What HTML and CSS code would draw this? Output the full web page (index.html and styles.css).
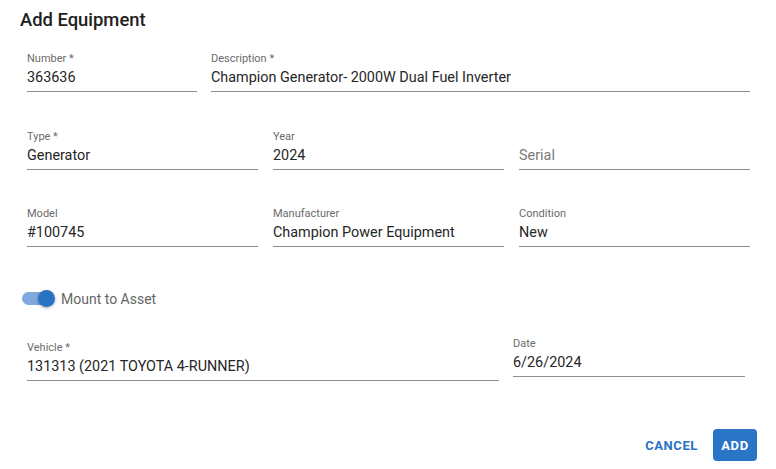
FILE: index.html
```html
<!DOCTYPE html>
<html>
<head>
<meta charset="utf-8">
<title>Add Equipment</title>
<link rel="stylesheet" href="styles.css">
</head>
<body>
<div class="dialog">
  <h2 class="title">Add Equipment</h2>
  <div class="content">
    <div class="row row-a">
      <div class="field"><div class="label">Number *</div><div class="value">363636</div></div>
      <div class="field"><div class="label">Description *</div><div class="value">Champion Generator- 2000W Dual Fuel Inverter</div></div>
    </div>
    <div class="row row-b">
      <div class="field"><div class="label">Type *</div><div class="value">Generator</div></div>
      <div class="field"><div class="label">Year</div><div class="value">2024</div></div>
      <div class="field"><div class="label"></div><div class="value placeholder">Serial</div></div>
    </div>
    <div class="row row-b">
      <div class="field"><div class="label">Model</div><div class="value">#100745</div></div>
      <div class="field"><div class="label">Manufacturer</div><div class="value">Champion Power Equipment</div></div>
      <div class="field"><div class="label">Condition</div><div class="value">New</div></div>
    </div>
    <div class="toggle-row">
      <span class="switch"><span class="track"></span><span class="thumb"></span></span>
      <span class="toggle-label">Mount to Asset</span>
    </div>
    <div class="row row-c">
      <div class="field"><div class="label">Vehicle *</div><div class="value">131313 (2021 TOYOTA 4-RUNNER)</div></div>
      <div class="field field-date"><div class="label">Date</div><div class="value">6/26/2024</div></div>
    </div>
  </div>
  <div class="actions">
    <button class="btn btn-text">CANCEL</button>
    <button class="btn btn-primary">ADD</button>
  </div>
</div>
</body>
</html>
```
FILE: styles.css
```css
* { box-sizing: border-box; }
html, body { margin: 0; padding: 0; background: #fff; }
body { font-family: Roboto, "Noto Sans", "Liberation Sans", sans-serif; color: #212121; }
.dialog { width: 776px; height: 469px; display: flex; flex-direction: column; }
.title { margin: 8px 0 0 20px; font-size: 18.4px; font-weight: 500; line-height: 24px; color: #212121; }
.content { padding: 0 26px 0 27px; margin-top: 20px; }
.row { display: grid; align-items: start; }
.row-a { grid-template-columns: 170px 1fr; column-gap: 14px; }
.row-b { grid-template-columns: repeat(3, 1fr); column-gap: 15px; margin-top: 38px; }
.row-b + .row-b { margin-top: 37px; }
.row-c { grid-template-columns: 472px 1fr; column-gap: 14px; margin-right: 5px; margin-top: 30px; }
.field { border-bottom: 1px solid #8e8e8e; }
.field-date { margin-top: -4px; }
.label { font-size: 11px; line-height: 14px; height: 14px; color: #6b6b6b; margin-bottom: 2px; }
.value { font-size: 14.4px; line-height: 20px; padding-bottom: 3px; color: #262626; white-space: nowrap; overflow: hidden; }
.value.placeholder { color: #7a7a7a; }
.toggle-row { display: flex; align-items: center; height: 24px; margin-top: 40px; margin-left: -5px; }
.switch { position: relative; width: 34px; height: 24px; display: inline-block; }
.track { position: absolute; left: 0; top: 5px; width: 30px; height: 13px; border-radius: 7px; background: #7ea9dc; }
.thumb { position: absolute; left: 16px; top: 3px; width: 17px; height: 17px; border-radius: 50%; background: #2a72c4; box-shadow: 0 1px 3px rgba(0,0,0,0.35); }
.toggle-label { margin-left: 5px; font-size: 14px; color: #666; }
.actions { margin-top: auto; margin-bottom: 8px; margin-right: 19px; display: flex; justify-content: flex-end; align-items: center; gap: 7px; }
.btn { font-family: inherit; border: 0; font-size: 13px; font-weight: 700; letter-spacing: 0.6px; height: 32px; border-radius: 4px; cursor: pointer; }
.btn-text { background: transparent; color: #2a72c4; padding: 0 8px; }
.btn-primary { background: #2a75c6; color: #fff; width: 44px; padding: 0; }
```
